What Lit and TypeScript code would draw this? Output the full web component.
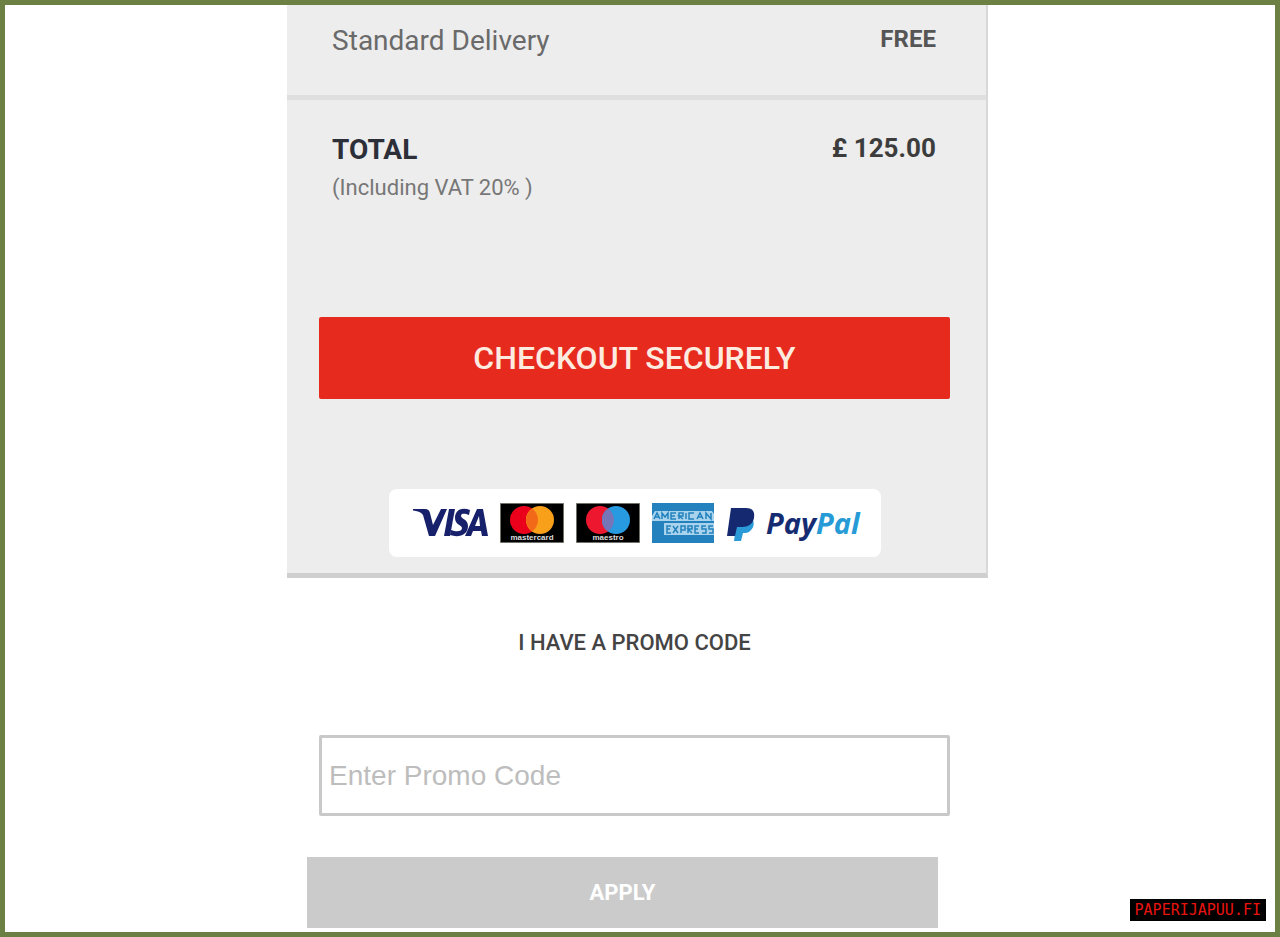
import { LitElement, html, css } from "lit";
import { customElement, state } from "lit/decorators.js";

@customElement("payment-marks")
class PaymentMarks extends LitElement {
  static styles = css`
    :host {
      display: flex;
      align-items: center;
      gap: 12px;
      padding: 13px 15px 13px 24px;
      border-radius: 8px;
      background: #fff;
    }
    svg {
      display: block;
      height: 42px;
    }
    .text {
      font-family: "Open Sans", "Liberation Sans", sans-serif;
      font-weight: 700;
      font-style: italic;
    }
    .caption {
      font-family: "Liberation Sans", sans-serif;
      font-weight: 700;
      fill: #ddd;
      font-size: 8px;
    }
  `;

  render() {
    return html`
      <svg width="75" viewBox="0 0 75 42" role="img" aria-label="Visa">
        <path
          fill="#17206b"
          d="M0 7h12c3 0 4 1 5 4l3 12 8-16h6L22 34h-6L10 13C8 10 4 9 0 8.500z"
        />
        <path fill="#17206b" d="M36 7h6l-5 27h-6z" />
        <path
          fill="#17206b"
          d="M57 8l-1 5c-4-1.500-8-2-8 1 0 3 7 3 7 10 0 9-9 12-18 9l1-5c5 2 11 2 11-2 0-3-7-3-7-10C42 8 49 5 57 8z"
        />
        <path
          fill="#17206b"
          fill-rule="evenodd"
          d="M64 7h6l5 27h-6l-1-5h-8l-2 5h-6zM66 14l-4 10h5z"
        />
      </svg>
      <svg width="64" viewBox="0 0 64 42" role="img" aria-label="Mastercard">
        <path fill="#000" stroke="#6d7168" d="M.5 1.500h63v39H.5z" />
        <circle cx="24" cy="18" r="14" fill="#eb001b" />
        <circle cx="40" cy="18" r="14" fill="#f9a01b" />
        <path fill="#f26a18" d="M32 6.500a14 14 0 0 1 0 23 14 14 0 0 1 0-23z" />
        <text class="caption" x="32" y="38" text-anchor="middle">mastercard</text>
      </svg>
      <svg width="64" viewBox="0 0 64 42" role="img" aria-label="Maestro">
        <path fill="#000" stroke="#6d7168" d="M.5 1.500h63v39H.5z" />
        <circle cx="24" cy="18" r="14" fill="#ed1730" />
        <circle cx="40" cy="18" r="14" fill="#289be0" />
        <path fill="#7575b8" d="M32 6.500a14 14 0 0 1 0 23 14 14 0 0 1 0-23z" />
        <text class="caption" x="32" y="38" text-anchor="middle">maestro</text>
      </svg>
      <svg width="62" viewBox="0 0 62 42" role="img" aria-label="American Express">
        <path fill="#2382bd" d="M0 1h62v40H0z" />
        <path fill="#a9d3ec" d="M3 9h57l2 3v7H0v-5zM12 21h50v12H12z" />
        <path
          fill="none"
          stroke="#2382bd"
          stroke-width="1.500"
          d="M2 17l3-6 3 6M3 15h4M10 17v-6l3 4 3-4v6M24 11h-5v6h5M19 14h4M27 17v-6h4v3h-4l4 3M34 11v6M42 11h-5v6h5M45 17l3-6 3 6M46 15h4M54 17v-6l5 6v-6M19 24h-4v7h4M15 27h3M21 24l5 7M26 24l-5 7M29 31v-7h4v4h-4M36 31v-7h4v3h-4l4 4M47 24h-4v7h4M43 27h3M54 24h-4v3h4v4h-4M61 24h-4v3h4v4h-4"
        />
      </svg>
      <svg width="138" viewBox="0 0 138 42" role="img" aria-label="PayPal">
        <path
          fill="#2a9bd8"
          d="M11 17h15c3 3 2 9-2 12-2 2-4 2-7 2l-2 8H8z"
        />
        <path
          fill="#14296f"
          d="M5 6h15c7 0 9 4 8 10-1 6-6 9-12 9h-5l-2 9H1z"
        />
        <text class="text" x="40" y="32" font-size="29" fill="#152c72"
          >Pay<tspan fill="#269bd6">Pal</tspan></text
        >
      </svg>
    `;
  }
}

@customElement("app-root")
class AppRoot extends LitElement {
  @state() private code = "";

  static styles = css`
    :host {
      display: block;
      font-family: Roboto, "Liberation Sans", sans-serif;
      color: #333;
    }
    * {
      box-sizing: border-box;
    }
    .page {
      position: relative;
      min-height: 100vh;
      padding-right: 5px;
      border: 5px solid #6d8044;
      background: #fff;
    }
    .column {
      width: 55.4%;
      min-width: 320px;
      margin: 0 auto;
    }
    .summary {
      margin: 0;
      background: #ededed;
      border-right: 2px solid #d8d8d8;
      border-bottom: 5px solid #cfcfcf;
    }
    .row {
      display: flex;
      justify-content: space-between;
      align-items: flex-start;
      padding: 0 50px 0 45px;
    }
    .delivery {
      padding-top: 16px;
      height: 95px;
      border-bottom: 5px solid #dfdfdf;
    }
    .name {
      font-size: 28px;
      line-height: 40px;
      color: #6a6a6a;
    }
    .amount {
      font-size: 26px;
      line-height: 36px;
      font-weight: 700;
      color: #3c3c3c;
    }
    .delivery .amount {
      font-size: 24px;
      color: #555;
    }
    .total {
      padding-top: 30px;
    }
    .heading {
      margin: 0;
      font-size: 28px;
      line-height: 40px;
      font-weight: 700;
      color: #2c2e38;
    }
    .note {
      margin: 0;
      font-size: 22px;
      line-height: 36px;
      color: #777;
    }
    button {
      display: block;
      width: 100%;
      border: 0;
      padding: 0;
      font-family: inherit;
      color: #fff;
      cursor: pointer;
    }
    .action {
      padding: 111px 36px 90px 32px;
    }
    .checkout {
      height: 82px;
      border-radius: 2px;
      background: #e72a1e;
      font-size: 32px;
      font-weight: 500;
      color: #fdebe0;
    }
    .marks {
      display: flex;
      justify-content: center;
      padding: 0 2px 16px 0;
    }
    .marks payment-marks {
      width: 492px;
      box-sizing: border-box;
    }
    .promo {
      padding: 0 38px 0 32px;
    }
    .label {
      display: block;
      padding-top: 45px;
      text-align: center;
      font-size: 22px;
      line-height: 40px;
      font-weight: 500;
      color: #444;
    }
    input {
      display: block;
      width: 100%;
      height: 81px;
      margin-top: 72px;
      padding: 0 7px;
      border: 3px solid #c9c9c9;
      border-radius: 2px;
      background: #fff;
      font-family: "Liberation Sans", sans-serif;
      font-size: 28px;
      color: #444;
    }
    input::placeholder {
      color: #bdbdbd;
      opacity: 1;
    }
    .submit {
      padding: 41px 50px 4px 20px;
    }
    .apply {
      height: 71px;
      background: #cbcbcb;
      font-size: 22px;
      font-weight: 700;
    }
    .stamp {
      position: absolute;
      right: 9px;
      bottom: 11px;
      padding: 0 5px;
      background: #000;
      color: #e8140f;
      font-family: "DejaVu Sans Mono", monospace;
      font-size: 15px;
      line-height: 22px;
    }
  `;

  private onInput(event: Event) {
    this.code = (event.target as HTMLInputElement).value;
  }

  render() {
    return html`
      <main class="page">
        <div class="column">
          <section class="summary">
            <div class="row delivery">
              <span class="name">Standard Delivery</span>
              <span class="amount">FREE</span>
            </div>
            <div class="row total">
              <div>
                <h2 class="heading">TOTAL</h2>
                <p class="note">(Including VAT 20% )</p>
              </div>
              <span class="amount">£ 125.00</span>
            </div>
            <div class="action">
              <button class="checkout" type="button">CHECKOUT SECURELY</button>
            </div>
            <div class="marks"><payment-marks></payment-marks></div>
          </section>
          <form @submit=${(event: Event) => event.preventDefault()}>
            <div class="promo">
              <label class="label" for="promo">I HAVE A PROMO CODE</label>
              <input
                id="promo"
                type="text"
                placeholder="Enter Promo Code"
                .value=${this.code}
                @input=${this.onInput}
              />
            </div>
            <div class="submit">
              <button class="apply" type="submit">APPLY</button>
            </div>
          </form>
        </div>
        <div class="stamp">PAPERIJAPUU.FI</div>
      </main>
    `;
  }
}
